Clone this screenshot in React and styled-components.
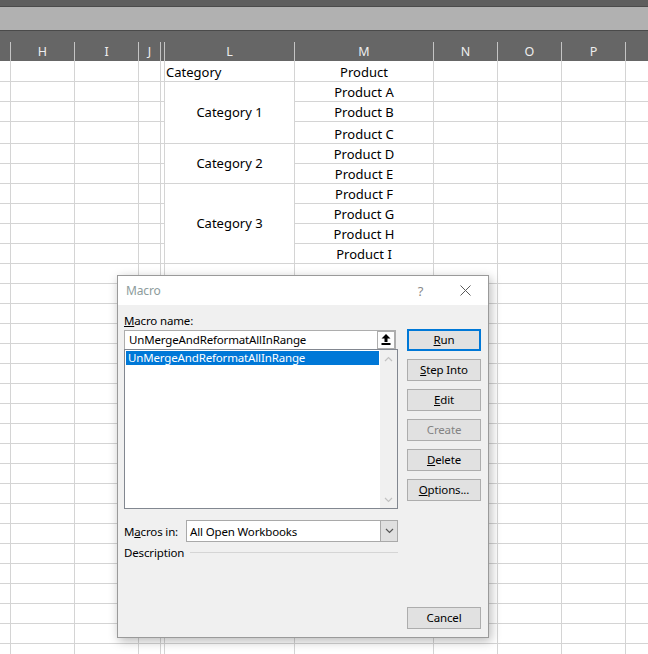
import React from 'react'
import styled, { createGlobalStyle } from 'styled-components'

const GlobalStyle = createGlobalStyle`
  html, body {
    margin: 0;
    padding: 0;
    background: #fff;
    overflow: hidden;
  }
`

// Sheet layout
const COLS = [11, 64, 64, 22, 4, 130, 139, 64, 64, 64, 22]
const LETTERS = ['', 'H', 'I', 'J', '', 'L', 'M', 'N', 'O', 'P', '']
const ROW_COUNT = 30

const Page = styled.div`
  position: relative;
  width: 648px;
  height: 654px;
  overflow: hidden;
  background: #fff;
`

const TopStrip = styled.div`
  height: 6px;
  background: #5e5e5e;
  border-bottom: 1px solid #4b4b4b;
`

const FormulaBand = styled.div`
  height: 23px;
  background: #b1b1b1;
  border-bottom: 1px solid #4a4a4a;
`

const HeaderArea = styled.div`
  height: 30px;
  background: #666666;
  display: flex;
  flex-direction: column;
  justify-content: flex-end;
`

const HeaderRow = styled.div`
  display: grid;
  grid-template-columns: ${COLS.map(w => w + 'px').join(' ')};
  height: 19px;
`

const HeaderCell = styled.div`
  box-sizing: border-box;
  border-right: ${p => (p.$last ? 'none' : '1px solid #c4c4c4')};
  display: flex;
  align-items: center;
  justify-content: center;
  color: #eeeeee;
  font-family: "Noto Sans", "Liberation Sans", sans-serif;
  font-size: 12.5px;
  line-height: 14px;
`

const Sheet = styled.div`
  display: grid;
  grid-template-columns: ${COLS.map(w => w + 'px').join(' ')};
  grid-template-rows: 21px 20px 20px 22px repeat(${ROW_COUNT - 4}, 20px);
`

const Cell = styled.div`
  box-sizing: border-box;
  grid-row: ${p => (p.$span ? `span ${p.$span}` : 'auto')};
  display: flex;
  align-items: ${p => (p.$span ? 'center' : 'flex-end')};
  justify-content: ${p => (p.$left ? 'flex-start' : 'center')};
  padding-left: ${p => (p.$left ? '1px' : '0')};
  padding-bottom: ${p => (p.$span ? '2px' : '1px')};
  border-right: ${p => (p.$last ? 'none' : '1px solid #d4d4d4')};
  border-bottom: 1px solid #d4d4d4;
  font-family: "Noto Sans", "Liberation Sans", sans-serif;
  font-size: 13px;
  line-height: 16px;
  color: #000;
  white-space: nowrap;
  overflow: hidden;
`

// Dialog
const Dialog = styled.div`
  position: absolute;
  left: 117px;
  top: 275px;
  width: 372px;
  height: 363px;
  box-sizing: border-box;
  border: 1px solid #9a9a9a;
  background: #f0f0f0;
  box-shadow: 2px 3px 10px rgba(0, 0, 0, 0.28);
  display: flex;
  flex-direction: column;
  font-family: "Segoe UI", "Noto Sans", sans-serif;
  font-size: 11.5px;
  letter-spacing: -0.15px;
  color: #000;
`

const TitleBar = styled.div`
  height: 29px;
  flex-shrink: 0;
  background: #fff;
  display: flex;
  align-items: center;
`

const TitleText = styled.div`
  flex: 1;
  padding-left: 8px;
  color: #8d9c9c;
  font-size: 12px;
`

const TitleButton = styled.div`
  width: 45px;
  height: 29px;
  display: flex;
  align-items: center;
  justify-content: center;
  color: #8a8a8a;
  font-size: 13px;
`

const Body = styled.div`
  flex: 1;
  display: flex;
  gap: 9px;
  padding: 8px 7px 8px 6px;
`

const LeftCol = styled.div`
  width: 274px;
  display: flex;
  flex-direction: column;
`

const RightCol = styled.div`
  width: 74px;
  display: flex;
  flex-direction: column;
  gap: 8px;
  padding-top: 16px;
`

const Label = styled.div`
  height: 17px;
  line-height: 16px;
  white-space: nowrap;
`

const NameInput = styled.div`
  box-sizing: border-box;
  width: 272px;
  height: 19px;
  background: #fff;
  border: 1px solid #adadad;
  border-bottom: none;
  display: flex;
  align-items: center;
  padding-left: 4px;
`

const InputText = styled.div`
  flex: 1;
  line-height: 16px;
  white-space: nowrap;
`

const CollapseButton = styled.div`
  box-sizing: border-box;
  width: 18px;
  height: 18px;
  margin-top: -1px;
  border: 1px solid #adadad;
  background: #fdfdfd;
  display: flex;
  align-items: center;
  justify-content: center;
`

const ListBox = styled.div`
  box-sizing: border-box;
  height: 160px;
  background: #fff;
  border: 1px solid #828790;
  display: flex;
`

const ListItems = styled.div`
  flex: 1;
  padding: 1px;
`

const ListItem = styled.div`
  height: 14px;
  line-height: 13px;
  padding-left: 2px;
  background: ${p => (p.$selected ? '#0078d7' : 'transparent')};
  color: ${p => (p.$selected ? '#fff' : '#000')};
  white-space: nowrap;
`

const ScrollTrack = styled.div`
  width: 17px;
  background: #f0f0f0;
  display: flex;
  flex-direction: column;
  justify-content: space-between;
`

const ScrollArrow = styled.div`
  height: 17px;
  display: flex;
  align-items: center;
  justify-content: center;
`

const FieldRow = styled.div`
  display: flex;
  align-items: center;
  height: ${p => p.$height || 22}px;
  margin-top: ${p => p.$gap || 0}px;
  padding-bottom: 1px;
`

const RowLabel = styled.div`
  width: 62px;
  white-space: nowrap;
`

const Combo = styled.div`
  box-sizing: border-box;
  flex: 1;
  height: 22px;
  background: #fff;
  border: 1px solid #a9a9a9;
  display: flex;
  align-items: center;
  padding-left: 3px;
`

const ComboText = styled.div`
  flex: 1;
  white-space: nowrap;
`

const ComboButton = styled.div`
  box-sizing: border-box;
  width: 17px;
  height: 20px;
  background: #e0e0e0;
  border-left: 1px solid #a9a9a9;
  display: flex;
  align-items: center;
  justify-content: center;
`

const Separator = styled.div`
  flex: 1;
  height: 1px;
  margin-left: 6px;
  background: #d5d5d5;
`

const Button = styled.div`
  box-sizing: border-box;
  height: 22px;
  padding-bottom: 1px;
  background: #e1e1e1;
  border: ${p => (p.$default ? '2px solid #0078d7' : '1px solid #adadad')};
  display: flex;
  align-items: center;
  justify-content: center;
  color: ${p => (p.$disabled ? '#838383' : '#000')};
  margin-top: ${p => (p.$bottom ? 'auto' : '0')};
  white-space: nowrap;
`

const products = ['A', 'B', 'C', 'D', 'E', 'F', 'G', 'H', 'I']

// merged cells in column L: start row -> [span, text]
const merges = { 1: [3, 'Category 1'], 4: [2, 'Category 2'], 6: [4, 'Category 3'] }
const covered = new Set([2, 3, 5, 7, 8, 9])

function SheetGrid() {
  const cells = []
  for (let r = 0; r < ROW_COUNT; r++) {
    COLS.forEach((_, c) => {
      const last = c === COLS.length - 1
      const key = `${r}-${c}`
      if (c === 5) {
        if (covered.has(r)) return
        if (merges[r]) {
          cells.push(<Cell key={key} $span={merges[r][0]}>{merges[r][1]}</Cell>)
          return
        }
        cells.push(<Cell key={key} $left>{r === 0 ? 'Category' : ''}</Cell>)
        return
      }
      if (c === 6) {
        let text = ''
        if (r === 0) text = 'Product'
        else if (r <= products.length) text = `Product ${products[r - 1]}`
        cells.push(<Cell key={key}>{text}</Cell>)
        return
      }
      cells.push(<Cell key={key} $last={last} />)
    })
  }
  return <Sheet>{cells}</Sheet>
}

const Chevron = ({ up, color = '#c2c2c2' }) => (
  <svg width="9" height="6" viewBox="0 0 9 6">
    <path d={up ? 'M1 5 L4.5 1.5 L8 5' : 'M1 1 L4.5 4.5 L8 1'} fill="none" stroke={color} strokeWidth="1.2" />
  </svg>
)

export default function App() {
  return (
    <Page>
      <GlobalStyle />
      <TopStrip />
      <FormulaBand />
      <HeaderArea>
        <HeaderRow>
          {LETTERS.map((l, i) => (
            <HeaderCell key={i} $last={i === LETTERS.length - 1}>{l}</HeaderCell>
          ))}
        </HeaderRow>
      </HeaderArea>
      <SheetGrid />

      <Dialog>
        <TitleBar>
          <TitleText>Macro</TitleText>
          <TitleButton>?</TitleButton>
          <TitleButton>
            <svg width="11" height="11" viewBox="0 0 11 11">
              <path d="M0.5 0.5 L10.5 10.5 M10.5 0.5 L0.5 10.5" stroke="#5a5a5a" strokeWidth="1" />
            </svg>
          </TitleButton>
        </TitleBar>
        <Body>
          <LeftCol>
            <Label><u>M</u>acro name:</Label>
            <NameInput>
              <InputText>UnMergeAndReformatAllInRange</InputText>
              <CollapseButton>
                <svg width="10" height="11" viewBox="0 0 10 11">
                  <path d="M5 0 L9.5 4.5 L6.5 4.5 L6.5 8 L3.5 8 L3.5 4.5 L0.5 4.5 Z" fill="#000" />
                  <rect x="0.5" y="9" width="9" height="2" fill="#000" />
                </svg>
              </CollapseButton>
            </NameInput>
            <ListBox>
              <ListItems>
                <ListItem $selected>UnMergeAndReformatAllInRange</ListItem>
              </ListItems>
              <ScrollTrack>
                <ScrollArrow><Chevron up /></ScrollArrow>
                <ScrollArrow><Chevron /></ScrollArrow>
              </ScrollTrack>
            </ListBox>
            <FieldRow $gap={11}>
              <RowLabel>M<u>a</u>cros in:</RowLabel>
              <Combo>
                <ComboText>All Open Workbooks</ComboText>
                <ComboButton><Chevron color="#555" /></ComboButton>
              </Combo>
            </FieldRow>
            <FieldRow $height={19}>
              <div>Description</div>
              <Separator />
            </FieldRow>
          </LeftCol>
          <RightCol>
            <Button $default><u>R</u>un</Button>
            <Button><u>S</u>tep Into</Button>
            <Button><u>E</u>dit</Button>
            <Button $disabled>Create</Button>
            <Button><u>D</u>elete</Button>
            <Button><u>O</u>ptions...</Button>
            <Button $bottom>Cancel</Button>
          </RightCol>
        </Body>
      </Dialog>
    </Page>
  )
}
